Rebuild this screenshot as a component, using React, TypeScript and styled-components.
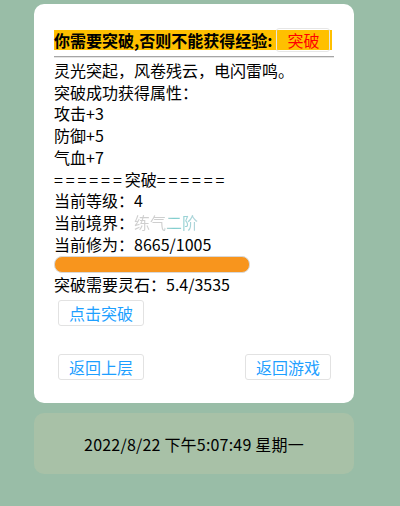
import styled, { createGlobalStyle } from "styled-components";

const GlobalStyle = createGlobalStyle`
  html, body {
    margin: 0;
    padding: 0;
    background: #99bda7;
    font-family: "Noto Sans CJK SC", "Noto Sans", sans-serif;
    font-size: 16px;
    color: #000;
  }
`;

const Page = styled.div`
  width: 320px;
  margin: 0 0 0 34px;
  padding-top: 4px;
`;

const Card = styled.div`
  background: #fff;
  border-radius: 10px;
  padding: 26px 20px 23px;
`;

const Header = styled.div`
  display: flex;
  align-items: center;
  height: 20px;
  width: 278px;
  background: #ffc000;
  font-weight: bold;
  font-size: 16px;
  line-height: 20px;
`;

const HeaderBtn = styled.span`
  box-sizing: border-box;
  height: 24px;
  line-height: 22px;
  margin-left: 4px;
  padding: 0 10px;
  border: 1px solid #e6e6e6;
  border-radius: 3px;
  color: #ff0000;
  font-weight: normal;
`;

const Rule = styled.div`
  margin-top: 6px;
  border-top: 1px solid #a6a6a6;
  border-bottom: 1px solid #e4e4e4;
  margin-bottom: 2px;
`;

const Line = styled.div`
  line-height: 21.7px;
  white-space: nowrap;
`;

const Equals = styled.span`
  letter-spacing: 2.9px;
`;

const Realm = styled.span`
  background: linear-gradient(90deg, #cfcfcf 0%, #cfcfcf 45%, #7fcfcf 62%, #b7d6dc 100%);
  -webkit-background-clip: text;
  background-clip: text;
  color: transparent;
`;

const Bar = styled.div`
  box-sizing: border-box;
  width: 196px;
  height: 17px;
  margin: 1px 0 1px;
  border-radius: 8px;
  border: 1px solid #d8d8d8;
  background: #f8951d;
`;

const Row = styled.div<{ $split?: boolean; $top: number }>`
  display: flex;
  justify-content: ${(p) => (p.$split ? "space-between" : "flex-start")};
  margin-top: ${(p) => p.$top}px;
  padding: 0 3px 0 4px;
`;

const Btn = styled.button`
  box-sizing: border-box;
  width: 86px;
  height: 26px;
  padding: 0;
  border: 1px solid #e2e2e2;
  border-radius: 3px;
  background: #fff;
  color: #1e9fff;
  font-family: inherit;
  font-size: 16px;
  line-height: 24px;
`;

const Clock = styled.div`
  margin-top: 10px;
  height: 61px;
  border-radius: 10px;
  background: #a8c1a7;
  display: flex;
  align-items: center;
  justify-content: center;
  font-size: 16px;
  letter-spacing: 0.2px;
`;

export default function App() {
  return (
    <>
      <GlobalStyle />
      <Page>
        <Card>
          <Header>
            你需要突破,否则不能获得经验:
            <HeaderBtn>突破</HeaderBtn>
          </Header>
          <Rule />
          <Line>灵光突起，风卷残云，电闪雷鸣。</Line>
          <Line>突破成功获得属性：</Line>
          <Line>攻击+3</Line>
          <Line>防御+5</Line>
          <Line>气血+7</Line>
          <Line>
            <Equals>======</Equals>突破<Equals>======</Equals>
          </Line>
          <Line>当前等级：4</Line>
          <Line>
            当前境界：<Realm>练气二阶</Realm>
          </Line>
          <Line>当前修为：8665/1005</Line>
          <Bar />
          <Line>突破需要灵石：5.4/3535</Line>
          <Row $top={4}>
            <Btn>点击突破</Btn>
          </Row>
          <Row $split $top={28}>
            <Btn>返回上层</Btn>
            <Btn>返回游戏</Btn>
          </Row>
        </Card>
        <Clock>2022/8/22 下午5:07:49 星期一</Clock>
      </Page>
    </>
  );
}
